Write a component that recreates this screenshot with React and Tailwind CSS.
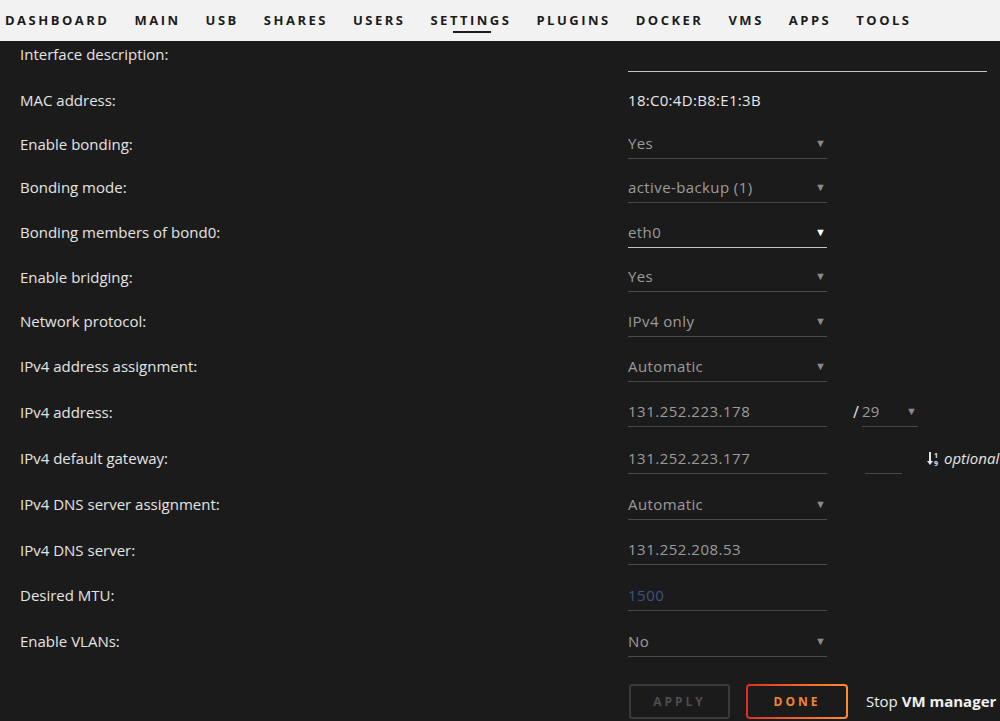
import React from 'react';

const NAV = ['DASHBOARD', 'MAIN', 'USB', 'SHARES', 'USERS', 'SETTINGS', 'PLUGINS', 'DOCKER', 'VMS', 'APPS', 'TOOLS'];

const font = { fontFamily: '"Open Sans", "Noto Sans", sans-serif' };

// Select-like field with underline and a small arrow
const SelectField = ({ value, active = false, width = 'w-[199px]' }) => (
  <div
    className={`flex items-center justify-between h-[30px] border-b shrink-0 ${width} ${
      active ? 'border-[#c4c4c4]' : 'border-[#4a4a4a]'
    }`}
  >
    <span className="text-[#9b9b9b] tracking-[0.4px]">{value}</span>
    <span className={`text-[11px] pr-[1px] ${active ? 'text-white' : 'text-[#8a8a8a]'}`}>▼</span>
  </div>
);

const TextField = ({ value, className = 'text-[#9b9b9b]', width = 'w-[199px]' }) => (
  <div className={`flex items-center h-[30px] border-b border-[#4a4a4a] shrink-0 ${width}`}>
    <span className={`tracking-[0.5px] ${className}`}>{value}</span>
  </div>
);

const Row = ({ label, children, h = 'h-[45px]' }) => (
  <div className={`flex items-center ${h}`}>
    <div className="w-[628px] shrink-0 pl-[20px] text-[#e4e4e4]">{label}</div>
    <div className="flex items-center">{children}</div>
  </div>
);

export default function App() {
  return (
    <div className="h-[721px] w-[1000px] overflow-hidden bg-[#1c1b1b] text-[15px]" style={font}>
      {/* Top navigation */}
      <div className="h-[41px] bg-[#f2f2f2] flex items-center pl-[5px] gap-[25px]">
        {NAV.map((item) => (
          <div key={item} className="relative h-full flex items-center">
            <span className="text-[13px] font-bold tracking-[2.5px] text-[#1c1c1c]">{item}</span>
            {item === 'SETTINGS' && (
              <span className="absolute left-[23px] top-[31px] w-[38px] h-[2px] bg-[#1c1c1c]" />
            )}
          </div>
        ))}
      </div>

      {/* Settings rows */}
      <div>
        <div className="flex items-start h-[36px]">
          <div className="w-[628px] shrink-0 pl-[20px] pt-[2px] text-[#e4e4e4]">Interface description:</div>
          <div className="w-[359px] h-[31px] border-b border-[#c4c4c4]" />
        </div>
        <Row label="MAC address:" h="h-[46px]">
          <span className="text-[#e8e8e8] tracking-[0.3px]">18:C0:4D:B8:E1:3B</span>
        </Row>
        <Row label="Enable bonding:" h="h-[42px]">
          <SelectField value="Yes" />
        </Row>
        <Row label="Bonding mode:">
          <SelectField value="active-backup (1)" />
        </Row>
        <Row label="Bonding members of bond0:">
          <SelectField value="eth0" active />
        </Row>
        <Row label="Enable bridging:" h="h-[44px]">
          <SelectField value="Yes" />
        </Row>
        <Row label="Network protocol:">
          <SelectField value="IPv4 only" />
        </Row>
        <Row label="IPv4 address assignment:">
          <SelectField value="Automatic" />
        </Row>
        <Row label="IPv4 address:" h="h-[46px]">
          <TextField value="131.252.223.178" />
          <span className="ml-[26px] mr-[3px] text-[#e4e4e4] text-[16px]">/</span>
          <SelectField value="29" width="w-[56px]" />
        </Row>
        <Row label="IPv4 default gateway:" h="h-[47px]">
          <TextField value="131.252.223.177" />
          <div className="ml-[38px] w-[37px] h-[30px] border-b border-[#4a4a4a] shrink-0" />
          <span className="ml-[25px] flex items-center text-[#e4e4e4] whitespace-nowrap">
            <svg width="12" height="16" viewBox="0 0 12 16" className="mr-[5px] shrink-0">
              <path d="M3 1v11" stroke="#e4e4e4" strokeWidth="2" />
              <path d="M0 10l3 4 3-4z" fill="#e4e4e4" />
              <text x="7" y="7" fontSize="7" fill="#e4e4e4" fontWeight="bold">1</text>
              <text x="7" y="15" fontSize="7" fill="#e4e4e4" fontWeight="bold">9</text>
            </svg>
            <em>optional</em>
          </span>
        </Row>
        <Row label="IPv4 DNS server assignment:">
          <SelectField value="Automatic" />
        </Row>
        <Row label="IPv4 DNS server:" h="h-[46px]">
          <TextField value="131.252.208.53" />
        </Row>
        <Row label="Desired MTU:">
          <TextField value="1500" className="text-[#3e5480]" />
        </Row>
        <Row label="Enable VLANs:" h="h-[47px]">
          <SelectField value="No" />
        </Row>

        {/* Buttons */}
        <div className="flex items-center pl-[629px] pt-[19px]">
          <button className="shrink-0 w-[101px] h-[35px] border-2 border-[#3a3a3a] rounded-[3px] text-[12px] font-bold tracking-[3px] text-[#4e4e4e]">
            APPLY
          </button>
          <div className="shrink-0 ml-[16px] p-[2px] rounded-[4px] bg-gradient-to-r from-[#e22828] to-[#ff8c2f]">
            <button className="w-[98px] h-[31px] rounded-[2px] bg-[#1c1b1b] text-[12px] font-bold tracking-[3px] text-[#f5862e]">
              DONE
            </button>
          </div>
          <span className="ml-[18px] whitespace-nowrap text-[#f0f0f0]">
            Stop <b>VM manager</b> and Docker to change settings
          </span>
        </div>
      </div>
    </div>
  );
}
